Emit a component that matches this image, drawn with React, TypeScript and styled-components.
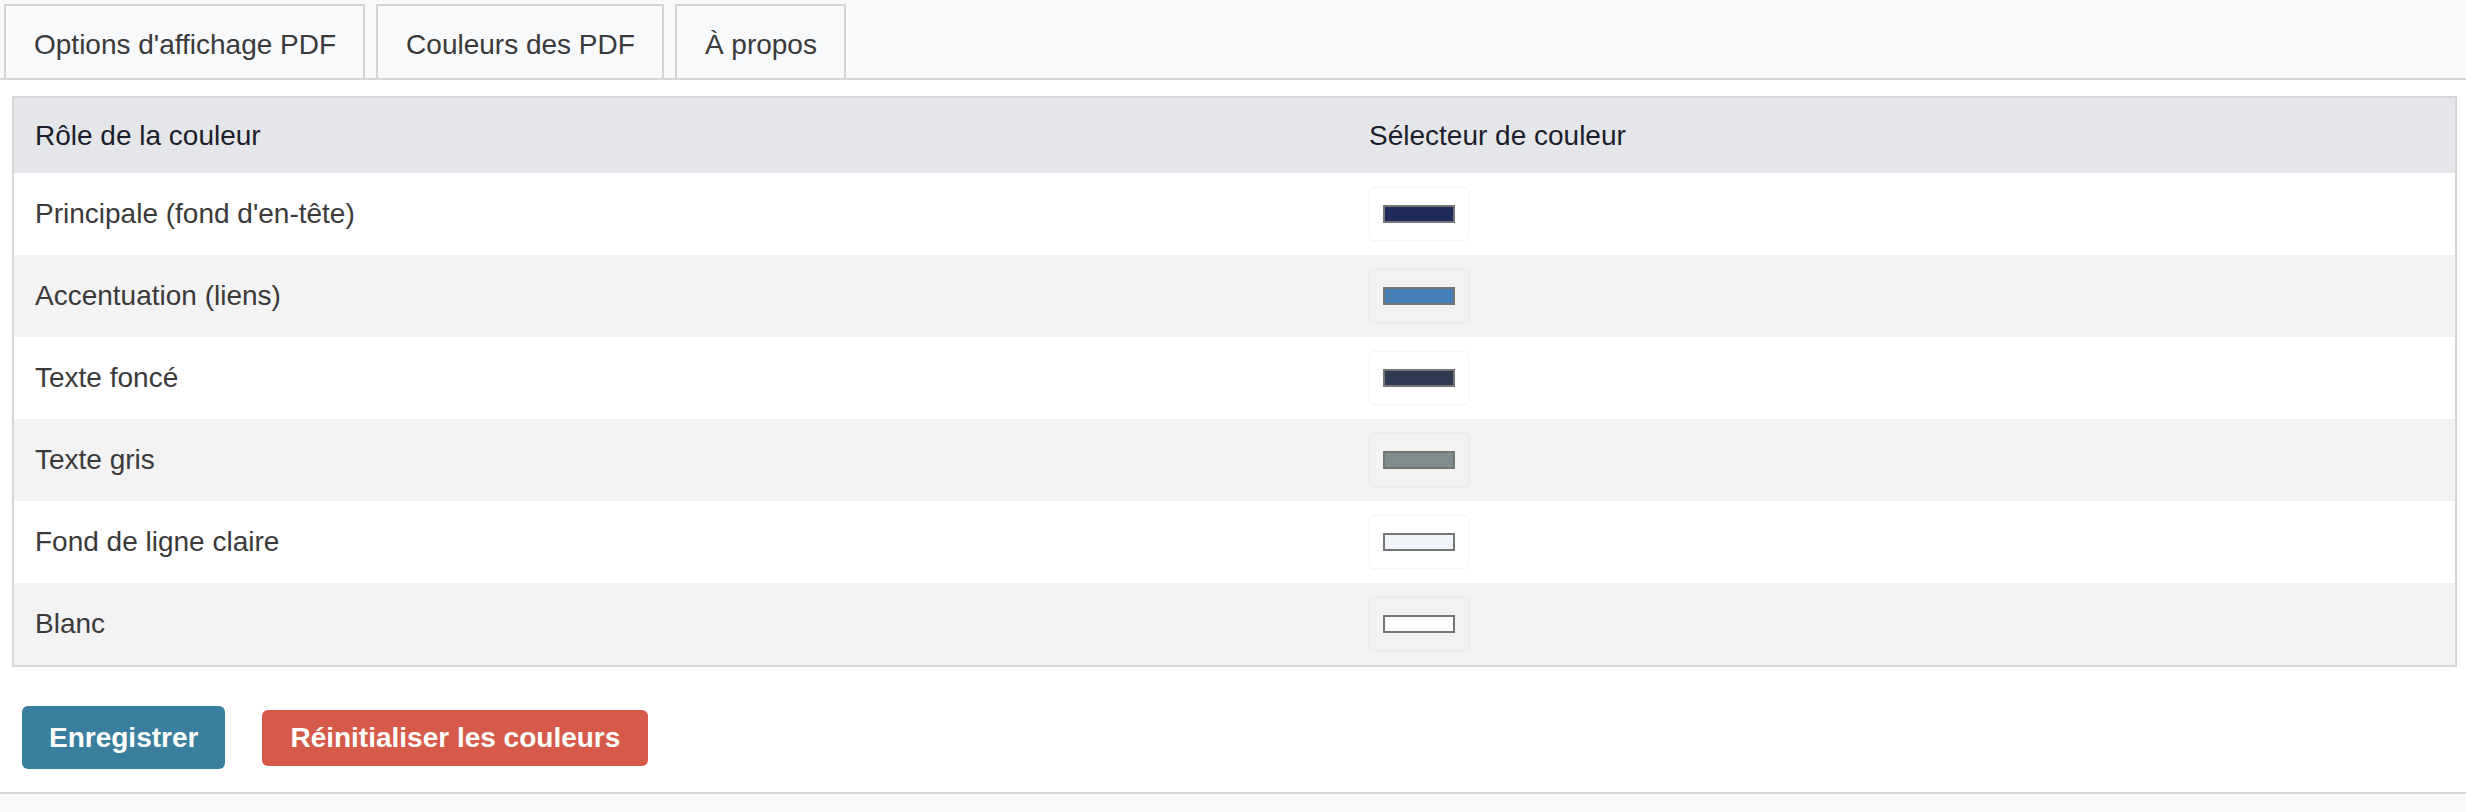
import styled, { createGlobalStyle } from "styled-components";

const GlobalStyle = createGlobalStyle`
	html, body {
		margin: 0;
		padding: 0;
		background: #ffffff;
	}
	body {
		font-family: "Liberation Sans", Arial, Helvetica, sans-serif;
		font-size: 28px;
		color: #3a3a3a;
	}
`;

const Page = styled.div`
	display: flex;
	flex-direction: column;
	width: 2466px;
	min-height: 812px;
`;

const TabBar = styled.nav`
	display: flex;
	align-items: flex-end;
	gap: 11px;
	height: 78px;
	padding: 0 0 0 4px;
	background-color: #f8f9fb;
	border-bottom: 2px solid #d6d6d6;
`;

const Tab = styled.button`
	display: flex;
	align-items: center;
	height: 74px;
	padding: 5px 27px 0 28px;
	border: 2px solid #d3d3d3;
	border-bottom: none;
	background-color: #f8f9fb;
	font-family: inherit;
	font-size: 28px;
	color: #3a3a3a;
	cursor: pointer;
`;

const Content = styled.main`
	padding: 16px 9px 0 12px;
`;

const Table = styled.div`
	display: grid;
	grid-template-columns: 1334px 1fr;
	border: 2px solid #d6d6d6;
`;

const Row = styled.div<{ $variant: "head" | "even" | "odd" }>`
	display: contents;

	& > * {
		background-color: ${({ $variant }) =>
			$variant === "head" ? "#e5e6ea" : $variant === "odd" ? "#f3f3f3" : "#ffffff"};
		color: ${({ $variant }) => ($variant === "head" ? "#1b1e2b" : "#3a3a3a")};
		height: ${({ $variant }) => ($variant === "head" ? "75px" : "82px")};
	}
`;

const Cell = styled.div`
	display: flex;
	align-items: center;
	padding: 0 22px 0 21px;
	font-size: 28px;
`;

const SwatchBox = styled.div`
	display: flex;
	align-items: center;
	justify-content: center;
	width: 100px;
	height: 54px;
	box-sizing: border-box;
	border-radius: 5px;
	border: 1px solid rgba(0, 0, 0, 0.04);
	box-shadow: 0 0 2px rgba(0, 0, 0, 0.05);
`;

const SwatchBar = styled.div<{ $color: string }>`
	width: 72px;
	height: 18px;
	box-sizing: border-box;
	border: 2px solid #757575;
	background-color: ${({ $color }) => $color};
`;

const Actions = styled.div`
	display: flex;
	align-items: center;
	gap: 37px;
	padding: 39px 0 23px 22px;
`;

const ActionButton = styled.button<{ $tone: "save" | "reset" }>`
	display: flex;
	align-items: center;
	justify-content: center;
	height: ${({ $tone }) => ($tone === "save" ? "63px" : "56px")};
	padding: 0 ${({ $tone }) => ($tone === "save" ? "27px" : "28px")};
	border: none;
	border-radius: 6px;
	background-color: ${({ $tone }) => ($tone === "save" ? "#3a7f9d" : "#d65a4a")};
	color: #ffffff;
	font-family: inherit;
	font-size: 28px;
	font-weight: 700;
	cursor: pointer;
`;

const Footer = styled.footer`
	flex-grow: 1;
	min-height: 18px;
	background-color: #f8f9fb;
	border-top: 2px solid #d9d9d9;
`;

const tabs = ["Options d'affichage PDF", "Couleurs des PDF", "À propos"];

const colors = [
	{ role: "Principale (fond d'en-tête)", value: "#1e2a5a" },
	{ role: "Accentuation (liens)", value: "#4380b8" },
	{ role: "Texte foncé", value: "#2e3b52" },
	{ role: "Texte gris", value: "#7f8c8d" },
	{ role: "Fond de ligne claire", value: "#f0f4f8" },
	{ role: "Blanc", value: "#ffffff" },
];

const App = () => {
	return (
		<Page>
			<GlobalStyle />
			<TabBar>
				{tabs.map((tab) => (
					<Tab key={tab}>{tab}</Tab>
				))}
			</TabBar>
			<Content>
				<Table>
					<Row $variant="head">
						<Cell>Rôle de la couleur</Cell>
						<Cell>Sélecteur de couleur</Cell>
					</Row>
					{colors.map((c, i) => (
						<Row
							key={c.role}
							$variant={i % 2 === 0 ? "even" : "odd"}
						>
							<Cell>{c.role}</Cell>
							<Cell>
								<SwatchBox>
									<SwatchBar $color={c.value} />
								</SwatchBox>
							</Cell>
						</Row>
					))}
				</Table>
			</Content>
			<Actions>
				<ActionButton $tone="save">Enregistrer</ActionButton>
				<ActionButton $tone="reset">Réinitialiser les couleurs</ActionButton>
			</Actions>
			<Footer />
		</Page>
	);
};

export default App;
